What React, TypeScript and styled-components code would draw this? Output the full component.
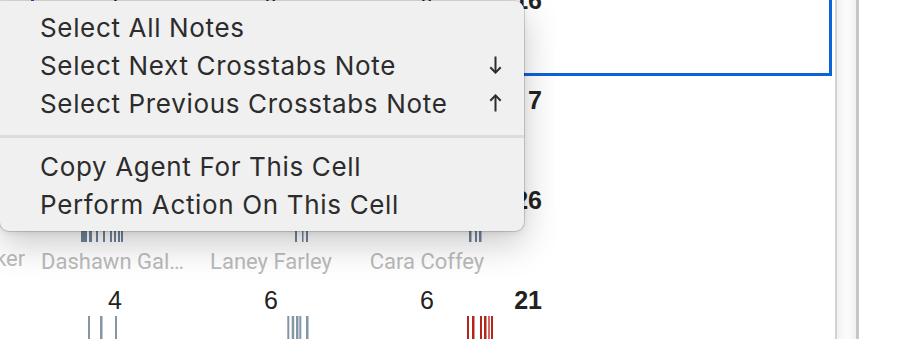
import React from "react";
import styled, { createGlobalStyle } from "styled-components";

const Global = createGlobalStyle`
  html, body { margin: 0; padding: 0; background: #ffffff; overflow: hidden; }
  #root { width: 924px; height: 339px; }
`;

const Page = styled.div`
  position: relative;
  display: flex;
  width: 924px;
  height: 339px;
  overflow: hidden;
  background: #ffffff;
`;

const Main = styled.div`
  width: 835px;
  height: 339px;
  overflow: hidden;
  flex: none;
`;

const Grid = styled.div`
  display: flex;
  flex-direction: column;
  margin-left: -113px;
  margin-top: -24px;
  width: 948px;
`;

const Row = styled.div`
  display: grid;
  grid-template-columns: 144px 801px 3px;
  height: 100px;
`;

const Body = styled.div<{ $selected?: boolean }>`
  box-sizing: border-box;
  height: 100px;
  border: 3px solid ${(p) => (p.$selected ? "#0b63d9" : "transparent")};
  padding-left: 3px;
  display: grid;
  grid-template-columns: 156px 156px 156px 37px 1fr;
`;

const Cell = styled.div`
  display: flex;
  flex-direction: column;
  align-items: center;
  min-width: 0;
`;

const Count = styled.div`
  padding-top: 5px;
  height: 32px;
  line-height: 32px;
  font-family: "Liberation Sans", Arial, sans-serif;
  font-size: 25px;
  color: #222222;
`;

const Total = styled.div`
  padding-top: 5px;
  height: 32px;
  line-height: 32px;
  text-align: right;
  font-family: "Liberation Sans", Arial, sans-serif;
  font-weight: 700;
  font-size: 25px;
  color: #222222;
`;

const Bars = styled.svg`
  display: block;
  width: 156px;
  height: 26px;
  flex: none;
`;

const Name = styled.div`
  margin-top: 5px;
  line-height: 29px;
  font-family: Roboto, "Noto Sans", sans-serif;
  font-size: 22px;
  color: #bababa;
  max-width: 148px;
  white-space: nowrap;
  overflow: hidden;
  text-overflow: ellipsis;
`;

const Track = styled.div`
  flex: none;
  width: 19px;
  height: 339px;
  border-left: 2px solid #d2d2d2;
  border-right: 3px solid #c6c6c6;
  background: linear-gradient(to right, #f1f1f1, #fbfbfb 40%, #fbfbfb 60%, #f0f0f0);
`;

const RightPane = styled.div`
  flex: 1;
  background: #ffffff;
`;

const Menu = styled.div`
  position: absolute;
  left: 0;
  top: 1px;
  width: 524px;
  box-sizing: border-box;
  padding: 7px 0 8px;
  background: #f0f0f0;
  border-radius: 0 9px 9px 9px;
  box-shadow: 0 0 0 1px rgba(0, 0, 0, 0.14), 0 12px 36px rgba(0, 0, 0, 0.22),
    0 2px 6px rgba(0, 0, 0, 0.08);
  font-family: Inter, "Noto Sans", sans-serif;
`;

const Item = styled.div`
  display: flex;
  align-items: center;
  justify-content: space-between;
  height: 38px;
  padding: 0 22px 0 40px;
  font-size: 26px;
  letter-spacing: 0.66px;
  color: #2c2c2c;
  white-space: nowrap;
`;

const Separator = styled.div`
  height: 3px;
  margin: 13px 0 9px;
  background: #dcdcdc;
`;

type Bar = [number, number, string?];
type CellData = { n: number; name: string; bars: Bar[] };
type RowData = { selected?: boolean; total: number; cells: CellData[] };

const G = "#8396a5";
const GD = "#70839a";
const R = "#b3261b";
const RL = "#cd6a62";

const rows: RowData[] = [
  {
    selected: true,
    total: 16,
    cells: [
      { n: 5, name: "Rowan Fischer", bars: [[60, 2], [70, 2]] },
      { n: 1, name: "Dashawn Gallagher", bars: [[70, 2]] },
      { n: 4, name: "Laney Farley", bars: [[90, 2], [98, 2]] },
      { n: 4, name: "Cara Coffey", bars: [[110, 2], [120, 2]] },
    ],
  },
  {
    total: 7,
    cells: [
      { n: 1, name: "Rowan Fischer", bars: [[60, 2]] },
      { n: 2, name: "Dashawn Gallagher", bars: [[50, 2], [64, 2]] },
      { n: 3, name: "Laney Farley", bars: [[96, 2], [104, 2]] },
      { n: 1, name: "Cara Coffey", bars: [[122, 2]] },
    ],
  },
  {
    total: 26,
    cells: [
      { n: 6, name: "Jamie Walker", bars: [[60, 2], [74, 2]] },
      {
        n: 11,
        name: "Dashawn Gallagher",
        bars: [
          [44, 3, GD], [47, 3, GD], [52, 3, GD], [59, 2, GD], [66, 2, GD],
          [73, 2, GD], [77, 2, GD], [81, 2, GD], [84, 2, GD],
        ],
      },
      { n: 3, name: "Laney Farley", bars: [[102, 2, GD], [109, 1.5, GD], [113, 2, GD]] },
      { n: 6, name: "Cara Coffey", bars: [[120, 2.5, GD], [126, 2, GD], [130, 2.5, GD]] },
    ],
  },
  {
    total: 21,
    cells: [
      { n: 5, name: "Jamie Walker", bars: [[40, 2]] },
      { n: 4, name: "Dashawn Gallagher", bars: [[51, 2], [63, 2.5], [78, 2]] },
      {
        n: 6,
        name: "Laney Farley",
        bars: [[94.3, 2], [98.7, 2.5], [103, 2.5], [106.3, 2], [113, 2.5]],
      },
      {
        n: 6,
        name: "Cara Coffey",
        bars: [
          [118, 2, R], [123, 2.5, R], [131, 2, R], [135, 2.5, R], [139, 2, RL], [142, 2, R],
        ],
      },
    ],
  },
];

function BarStrip({ bars }: { bars: Bar[] }) {
  return (
    <Bars viewBox="0 0 156 26">
      {bars.map(([x, w, c], i) => (
        <rect key={i} x={x} y={0} width={w} height={26} fill={c ?? G} />
      ))}
    </Bars>
  );
}

function CrossCell({ cell }: { cell: CellData }) {
  return (
    <Cell>
      <Count>{cell.n}</Count>
      <BarStrip bars={cell.bars} />
      <Name>{cell.name}</Name>
    </Cell>
  );
}

function ArrowIcon({ up }: { up?: boolean }) {
  return (
    <svg width="13" height="18" viewBox="0 0 13 18" style={{ transform: up ? "rotate(180deg)" : undefined }}>
      <path d="M6.5 0.5 V16.5" stroke="#2c2c2c" strokeWidth="2" fill="none" />
      <path d="M1.3 11.3 L6.5 16.6 L11.7 11.3" stroke="#2c2c2c" strokeWidth="2" fill="none" strokeLinejoin="miter" />
    </svg>
  );
}

export default function App() {
  return (
    <>
      <Global />
      <Page>
        <Main>
          <Grid>
            {rows.map((row, ri) => (
              <Row key={ri}>
                <CrossCell cell={row.cells[0]} />
                <Body $selected={row.selected}>
                  {row.cells.slice(1).map((c, ci) => (
                    <CrossCell key={ci} cell={c} />
                  ))}
                  <Total>{row.total}</Total>
                  <div />
                </Body>
                <div />
              </Row>
            ))}
          </Grid>
        </Main>
        <Track />
        <RightPane />
        <Menu>
          <Item>Select All Notes</Item>
          <Item>
            Select Next Crosstabs Note
            <ArrowIcon />
          </Item>
          <Item>
            Select Previous Crosstabs Note
            <ArrowIcon up />
          </Item>
          <Separator />
          <Item>Copy Agent For This Cell</Item>
          <Item>Perform Action On This Cell</Item>
        </Menu>
      </Page>
    </>
  );
}
